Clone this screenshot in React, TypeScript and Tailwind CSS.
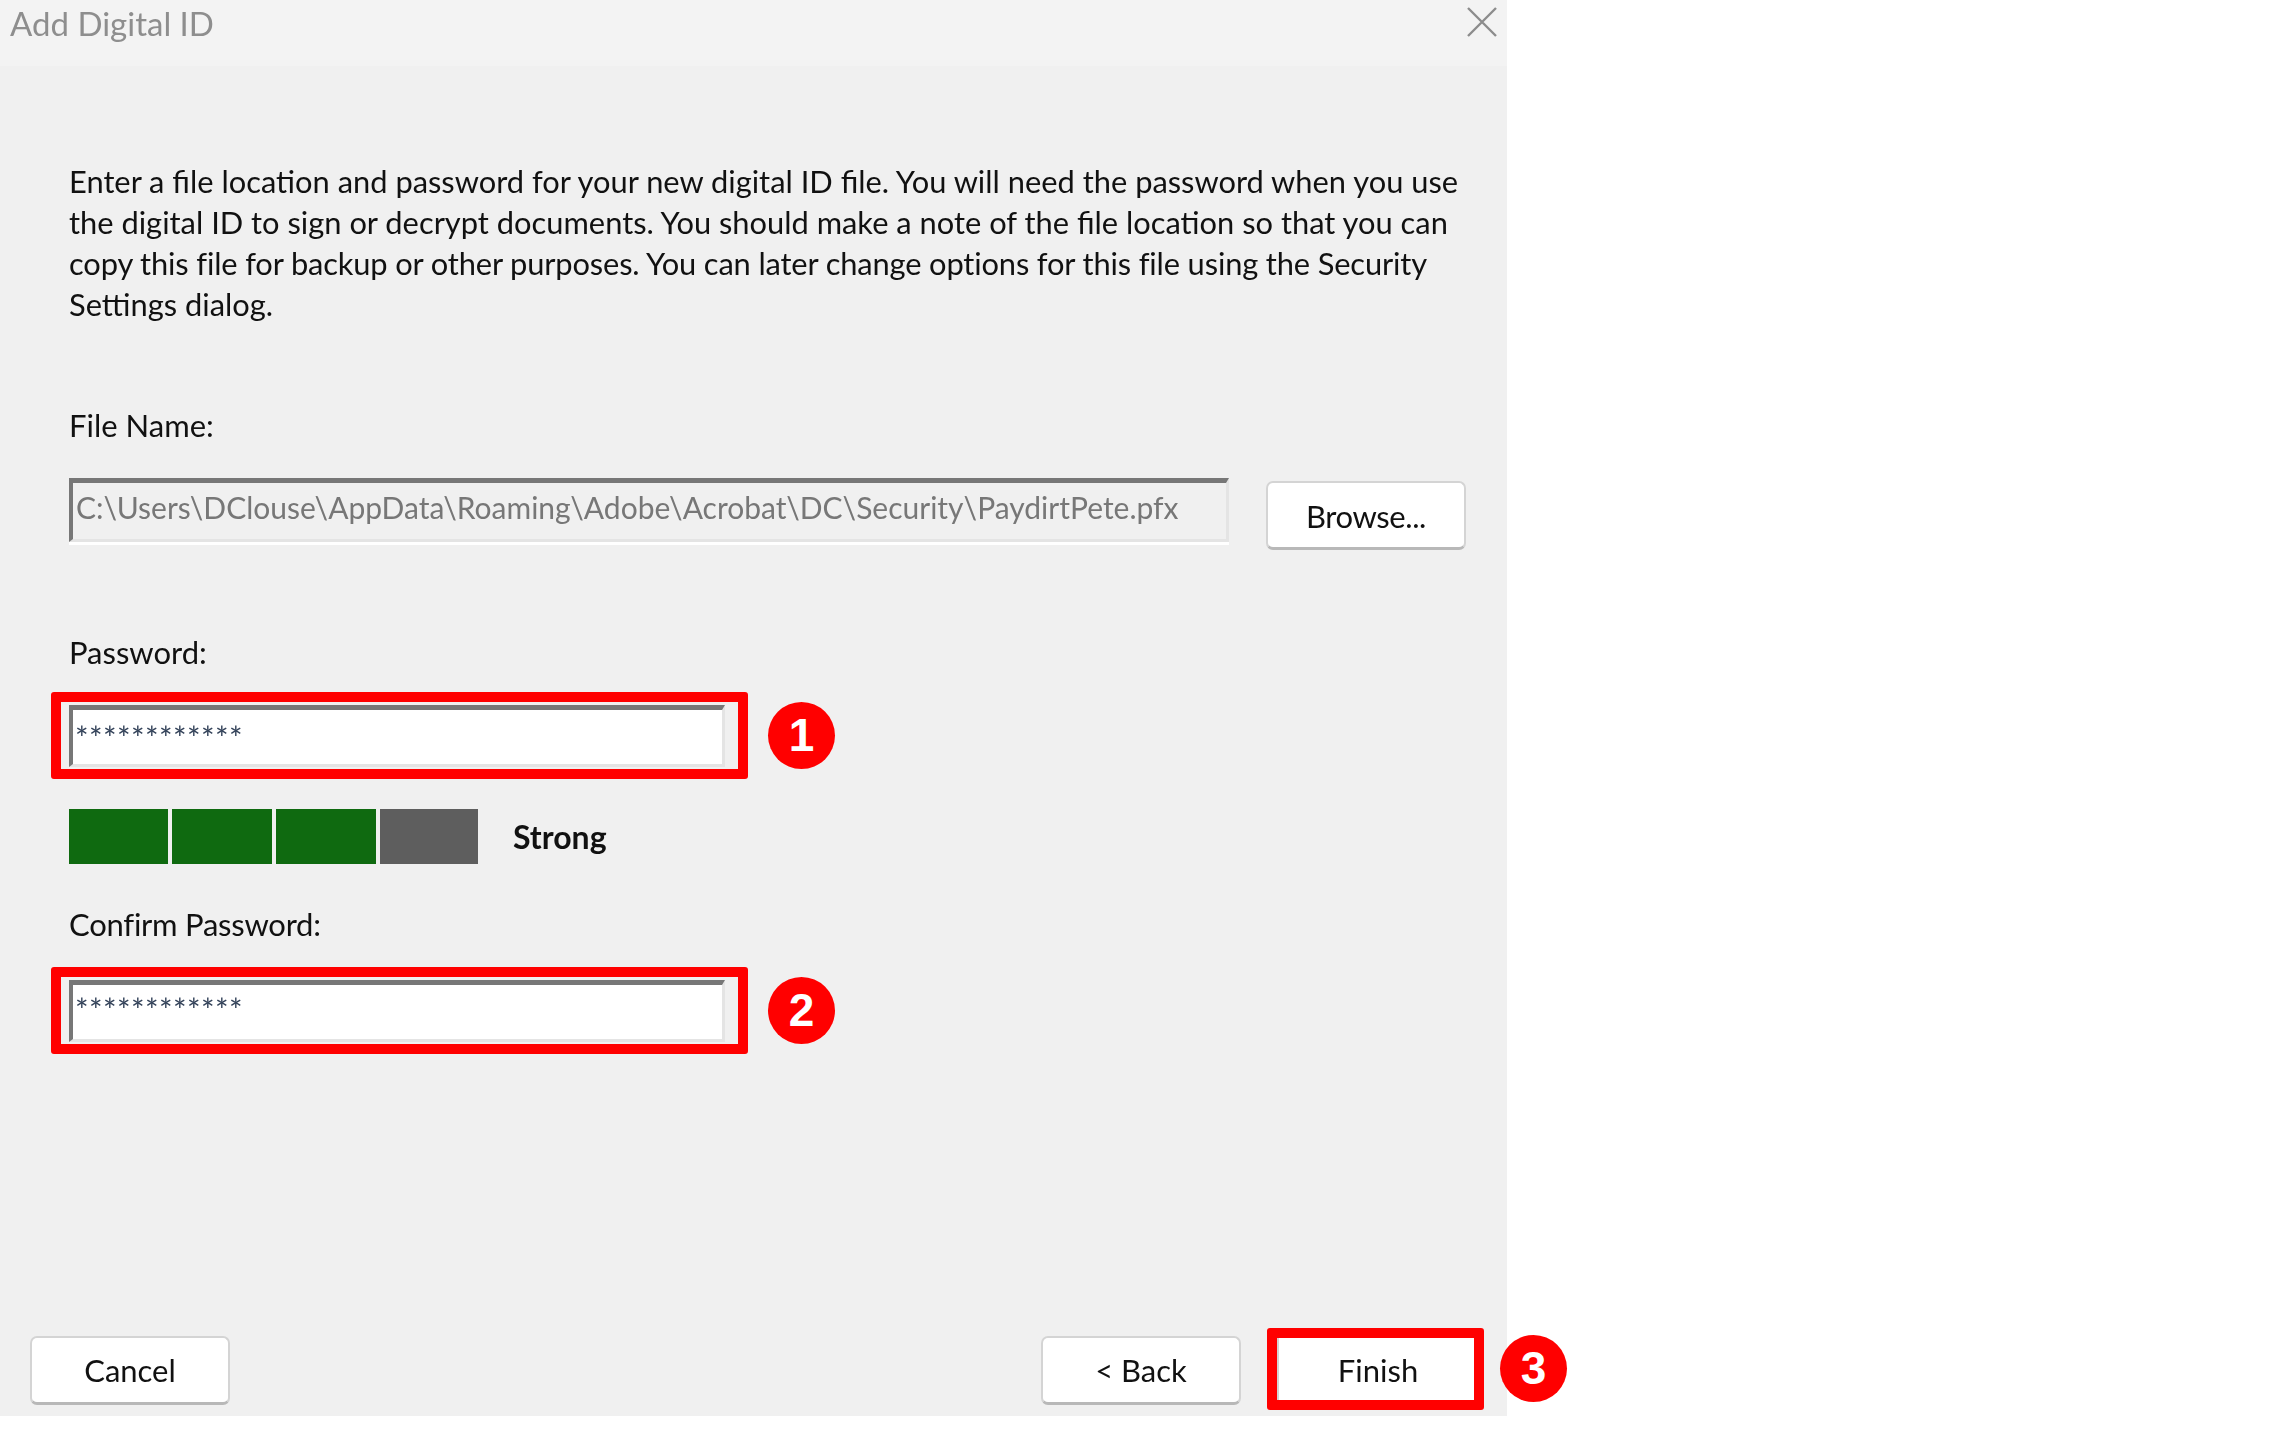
import { ReactNode } from "react"

const font = "font-['Lato','Noto_Sans',sans-serif]"

function Label({ children }: { children: ReactNode }) {
  return <div className="text-[31px] leading-[41px] blur-[0.4px]">{children}</div>
}

function ActionButton({ children }: { children: ReactNode }) {
  return (
    <button className="flex h-[69px] w-[200px] items-center justify-center rounded-[7px] border-2 border-b-[3px] border-[#d4d4d4] border-b-[#b8b8b8] bg-white pt-[2px] text-[31px] text-[#111]">
      <span className="blur-[0.4px]">{children}</span>
    </button>
  )
}

function Badge({ n }: { n: number }) {
  return (
    <div className="flex h-[67px] w-[67px] shrink-0 items-center justify-center rounded-full bg-[#ff0000] font-['Liberation_Sans',sans-serif] text-[46px] font-bold text-white">
      {n}
    </div>
  )
}

function PasswordField({ n }: { n: number }) {
  return (
    <div className="-ml-[18px] flex items-center gap-[20px]">
      <div className="h-[87px] w-[697px] rounded-[3px] border-[10px] border-[#ff0000] bg-[#f0f0f0] pl-[8px] pt-[3px]">
        <div className={`h-[62px] w-[656px] border-t-[5px] border-l-[4px] border-r-[3px] border-b-[3px] border-t-[#777] border-l-[#777] border-r-[#e4e4e4] border-b-[#e4e4e4] bg-white pl-[2px] text-[32px] tracking-[0.4px] text-[#34435a] ${n === 2 ? "leading-[50px]" : "leading-[56px]"}`}>
          <span className="blur-[0.4px]">************</span>
        </div>
      </div>
      <Badge n={n} />
    </div>
  )
}

export default function App() {
  return (
    <div className={`h-screen bg-white ${font}`}>
      <div className="flex h-[1416px] w-[1507px] flex-col bg-[#f0f0f0] text-[#111]">
        <div className="flex h-[66px] shrink-0 items-start justify-between bg-[#f3f3f3] pl-[10px] pr-[10px] pt-[2px]">
          <span className="text-[33px] leading-[42px] text-[#8e8e8e] blur-[0.4px]">Add Digital ID</span>
          <svg className="mt-[5px]" width="30" height="30" viewBox="0 0 30 30" fill="none" stroke="#8c8c8c" strokeWidth="2.4">
            <path d="M1 1 29 29M29 1 1 29" />
          </svg>
        </div>

        <div className="flex-1 flex flex-col">
          <div className="pl-[69px] pt-[95px]">
            <div className="whitespace-nowrap text-[30.85px] leading-[41px] blur-[0.4px]">
              <div>Enter a file location and password for your new digital ID file. You will need the password when you use</div>
              <div>the digital ID to sign or decrypt documents. You should make a note of the file location so that you can</div>
              <div className="tracking-[-0.15px]">copy this file for backup or other purposes. You can later change options for this file using the Security</div>
              <div>Settings dialog.</div>
            </div>

            <div className="mt-[80px]">
              <Label>File Name:</Label>
            </div>
            <div className="mt-[32px] flex items-start">
              <div className="h-[64px] w-[1160px] border-t-[5px] border-l-[4px] border-r-[3px] border-b-[3px] border-t-[#777] border-l-[#777] border-r-[#e4e4e4] border-b-[#e4e4e4] pl-[3px] text-[30px] leading-[48px] text-[#777] shadow-[0_3px_0_#fff]">
                <span className="blur-[0.4px]">{"C:\\Users\\DClouse\\AppData\\Roaming\\Adobe\\Acrobat\\DC\\Security\\PaydirtPete.pfx"}</span>
              </div>
              <div className="ml-[37px] mt-[3px]">
                <ActionButton>
                  <span className="tracking-[-0.4px]">Browse...</span>
                </ActionButton>
              </div>
            </div>

            <div className="mt-[82px]">
              <Label>Password:</Label>
            </div>
            <div className="mt-[19px]">
              <PasswordField n={1} />
            </div>

            <div className="mt-[30px] flex items-center">
              <div className="flex gap-[4px]">
                <div className="h-[55px] w-[99px] bg-[#0f6a10]" />
                <div className="h-[55px] w-[100px] bg-[#0f6a10]" />
                <div className="h-[55px] w-[100px] bg-[#0f6a10]" />
                <div className="h-[55px] w-[98px] bg-[#5e5e5e]" />
              </div>
              <span className="ml-[35px] text-[32px] font-bold blur-[0.4px]">Strong</span>
            </div>

            <div className="mt-[40px]">
              <Label>
                <span className="tracking-[-0.25px]">Confirm Password:</span>
              </Label>
            </div>
            <div className="mt-[22px]">
              <PasswordField n={2} />
            </div>
          </div>

          <div className="mt-auto flex items-center pb-[6px] pl-[30px] pr-[23px]">
            <div className="mt-[2px]">
              <ActionButton>Cancel</ActionButton>
            </div>
            <div className="flex-1" />
            <div className="mt-[2px]">
              <ActionButton>&lt; Back</ActionButton>
            </div>
            <div className="relative ml-[26px] h-[82px] w-[217px] rounded-[3px] border-[10px] border-[#ff0000] bg-white">
              <div className="flex h-full items-center justify-center border-l-2 border-[#d4d4d4] pl-[3px] pt-[3px] text-[31px]">
                <span className="blur-[0.4px]">Finish</span>
              </div>
              <div className="absolute left-[223px] top-[-3px]">
                <Badge n={3} />
              </div>
            </div>
          </div>
        </div>
      </div>
    </div>
  )
}
